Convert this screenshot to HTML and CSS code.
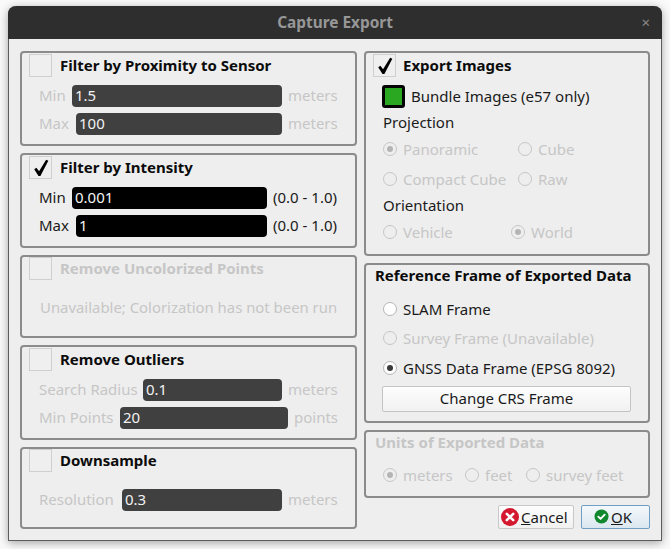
FILE: index.html
```html
<!DOCTYPE html>
<html lang="en">
<head>
<meta charset="utf-8">
<title>Capture Export</title>
<link rel="stylesheet" href="styles.css">
</head>
<body>
<div class="window">
  <header class="titlebar">
    <span class="title">Capture Export</span>
    <span class="close">×</span>
  </header>
  <main class="content">
    <div class="column left">
      <section class="group g-prox">
        <div class="head"><span class="check"></span><span class="head-text">Filter by Proximity to Sensor</span></div>
        <div class="rows">
          <div class="row r-min off"><span>Min</span><span class="input">1.5</span><span>meters</span></div>
          <div class="row r-max off"><span>Max</span><span class="input">100</span><span>meters</span></div>
        </div>
      </section>
      <section class="group g-int">
        <div class="head"><span class="check"><svg viewBox="0 0 22 22" class="tick"><path d="M4.4 12.8l2.3-1.6 2.8 3.8L16.9 2.8l2.3 1-8.3 16h-2z"/></svg></span><span class="head-text">Filter by Intensity</span></div>
        <div class="rows tight">
          <div class="row r-minr"><span>Min</span><span class="input live">0.001</span><span>(0.0 - 1.0)</span></div>
          <div class="row r-maxr"><span>Max</span><span class="input live">1</span><span>(0.0 - 1.0)</span></div>
        </div>
      </section>
      <section class="group g-unc">
        <div class="head"><span class="check"></span><span class="head-text off">Remove Uncolorized Points</span></div>
        <p class="note off">Unavailable; Colorization has not been run</p>
      </section>
      <section class="group g-out">
        <div class="head"><span class="check"></span><span class="head-text">Remove Outliers</span></div>
        <div class="rows tight">
          <div class="row r-search off"><span>Search Radius</span><span class="input">0.1</span><span>meters</span></div>
          <div class="row r-pts off"><span>Min Points</span><span class="input">20</span><span>points</span></div>
        </div>
      </section>
      <section class="group g-down">
        <div class="head"><span class="check"></span><span class="head-text">Downsample</span></div>
        <div class="rows solo">
          <div class="row r-res off"><span>Resolution</span><span class="input">0.3</span><span>meters</span></div>
        </div>
      </section>
    </div>
    <div class="column right">
      <section class="group g-img">
        <div class="head"><span class="check"><svg viewBox="0 0 22 22" class="tick"><path d="M4.4 12.8l2.3-1.6 2.8 3.8L16.9 2.8l2.3 1-8.3 16h-2z"/></svg></span><span class="head-text">Export Images</span></div>
        <div class="bundle"><span class="green"></span><span>Bundle Images (e57 only)</span></div>
        <div class="sub sub-proj">Projection</div>
        <div class="radios proj off">
          <label class="opt"><span class="radio on"></span>Panoramic</label>
          <label class="opt"><span class="radio"></span>Cube</label>
          <label class="opt"><span class="radio"></span>Compact Cube</label>
          <label class="opt"><span class="radio"></span>Raw</label>
        </div>
        <div class="sub sub-orient">Orientation</div>
        <div class="radios orient off">
          <label class="opt"><span class="radio"></span>Vehicle</label>
          <label class="opt"><span class="radio on"></span>World</label>
        </div>
      </section>
      <section class="group g-ref">
        <h2 class="group-title">Reference Frame of Exported Data</h2>
        <div class="stack">
          <label class="opt"><span class="radio live"></span>SLAM Frame</label>
          <label class="opt off"><span class="radio"></span>Survey Frame (Unavailable)</label>
          <label class="opt"><span class="radio live on"></span>GNSS Data Frame (EPSG 8092)</label>
        </div>
        <button class="crs" type="button">Change CRS Frame</button>
      </section>
      <section class="group g-units">
        <h2 class="group-title off">Units of Exported Data</h2>
        <div class="radios units off">
          <label class="opt"><span class="radio on"></span>meters</label>
          <label class="opt"><span class="radio"></span>feet</label>
          <label class="opt"><span class="radio"></span>survey feet</label>
        </div>
      </section>
      <div class="actions">
        <button class="btn cancel" type="button"><svg viewBox="0 0 18 18" class="btn-icon"><circle cx="9" cy="9" r="9" fill="#d3182f"/><path d="M5.8 5.8l6.4 6.4M12.2 5.8l-6.4 6.4" stroke="#fff" stroke-width="2.6" stroke-linecap="round" fill="none"/></svg><span><u>C</u>ancel</span></button>
        <button class="btn ok" type="button"><svg viewBox="0 0 16 16" class="btn-icon small"><circle cx="8" cy="8" r="7.5" fill="#12882e"/><path d="M4.6 8.2l2.4 2.4 4.4-4.6" stroke="#fff" stroke-width="2" stroke-linecap="round" stroke-linejoin="round" fill="none"/></svg><span><u>O</u>K</span></button>
      </div>
    </div>
  </main>
</div>
</body>
</html>
```
FILE: styles.css
```css
* { box-sizing: border-box; }
html, body { margin: 0; height: 549px; overflow: hidden; background: #fafafa; }
body {
  padding: 6px 8px 0;
  font-family: "Noto Sans", "Open Sans", sans-serif;
  font-size: 15px;
  color: #1a1a1a;
}
.window {
  width: 654px;
  height: 535px;
  background: #eeeeee;
  border: 1px solid #5c5c5c;
  border-top: 0;
  border-radius: 8px 8px 0 0;
  box-shadow: 0 2px 10px rgba(0, 0, 0, .35);
}
.titlebar {
  position: relative;
  height: 33px;
  margin: 0 -1px;
  padding-bottom: 1px;
  background: #2e2e2e;
  border-radius: 8px 8px 0 0;
  display: flex;
  align-items: center;
  justify-content: center;
}
.title { font-weight: 700; font-size: 15.4px; color: #979797; }
.close { position: absolute; right: 12px; top: 6px; color: #8a8a8a; font-size: 15px; }
.content {
  display: grid;
  grid-template-columns: 337px 286px;
  column-gap: 7px;
  padding: 12px 11px 0;
}
.column { display: flex; flex-direction: column; row-gap: 7px; }
.group {
  border: 2px solid #8b8b8b;
  border-radius: 4px;
  padding: 1px 0 0 7px;
}
.g-prox { height: 95px; }
.g-int { height: 94.5px; }
.g-unc { height: 83.5px; }
.g-out { height: 94.5px; }
.g-down { height: 82.5px; }
.g-img { height: 205px; }
.g-ref { height: 159.5px; padding: 0 0 0 9px; }
.g-units { height: 68px; padding: 0 0 0 9px; }
.head { display: flex; align-items: center; column-gap: 8px; height: 22.5px; }
.g-img .head { column-gap: 7px; }
.head-text { margin-bottom: 1px; font-weight: 700; font-size: 15px; color: #0c0c0c; }
.check {
  flex: none;
  width: 23px;
  height: 23px;
  border: 1px solid #cfcfcf;
  background: #efefef;
}
.tick { display: block; width: 21px; height: 21px; }
.tick path { fill: #000; }
.off, .off .head-text { color: #c6c6c6; }
.rows { display: flex; flex-direction: column; row-gap: 6px; padding: 8px 17px 0 11px; }
.rows.tight { padding-top: 8.5px; }
.rows.solo { padding-top: 17px; }
.row { display: grid; column-gap: 6px; height: 22px; align-items: center; }
.r-min { grid-template-columns: 26px 1fr 50px; }
.r-max { grid-template-columns: 30px 1fr 50px; }
.r-minr { grid-template-columns: 26px 1fr 65px; }
.r-maxr { grid-template-columns: 30px 1fr 65px; }
.r-search { grid-template-columns: 97px 1fr 50px; }
.r-pts { grid-template-columns: 74px 1fr 44px; }
.r-res { grid-template-columns: 76px 1fr 50px; }
.row > span { margin-bottom: 2px; white-space: nowrap; }
.row > span:first-child { margin-left: -1px; }
.row > .input {
  height: 22px;
  margin-bottom: 0;
  line-height: 20px;
  padding-left: 3px;
  background: #404040;
  color: #f2f2f2;
  border-radius: 4px;
}
.row > .input.live { background: #000; color: #f4f4f4; }
.note { margin: 0; padding: 17px 0 0 11px; font-size: 14.9px; white-space: nowrap; }
.bundle {
  display: flex;
  align-items: center;
  column-gap: 6px;
  margin: 8px 0 0 9px;
  height: 23px;
}
.green {
  width: 23px;
  height: 23px;
  background: #2aa821;
  border: 3px solid #050505;
  border-radius: 3px;
}
.sub { margin-left: 10px; height: 20px; line-height: 20px; }
.sub-proj { margin-top: 4px; }
.sub-orient { margin-top: 1px; }
.radios { display: grid; margin-left: 10px; }
.proj { grid-template-columns: 135px 1fr; grid-auto-rows: 29.5px; margin-top: 3px; }
.orient { grid-template-columns: 128px 1fr; grid-auto-rows: 20px; margin-top: 7px; }
.opt { display: flex; align-items: center; column-gap: 6px; white-space: nowrap; }
.radio {
  position: relative;
  flex: none;
  width: 14px;
  height: 14px;
  border: 1px solid #c6c6c6;
  border-radius: 50%;
}
.radio.on::after {
  content: "";
  position: absolute;
  inset: 3px;
  border-radius: 50%;
  background: #b4b4b4;
}
.radio.live { border-color: #b5b5b5; background: #fff; }
.radio.live.on::after { background: #3a3a3a; }
.group-title { margin: 0; font-size: 15px; font-weight: 700; line-height: 20px; color: #0c0c0c; }
.group-title.off { color: #c6c6c6; }
.stack { display: grid; grid-auto-rows: 29.5px; margin: 9px 0 0 8px; }
.crs {
  display: block;
  width: 249px;
  height: 26px;
  margin: 3px 0 0 7px;
  padding: 0 0 2px;
  border: 1px solid #c4c4c4;
  border-radius: 2px;
  background: linear-gradient(#fdfdfd, #f1f1f1);
  font: inherit;
  color: #1a1a1a;
}
.units { grid-template-columns: 82px 61px 1fr; margin: 13px 0 0 8px; height: 20px; }
.actions { display: flex; justify-content: flex-end; column-gap: 7px; }
.btn {
  display: flex;
  align-items: center;
  column-gap: 2px;
  height: 24px;
  padding: 0 0 0 2px;
  border: 1px solid #c8c8c8;
  border-radius: 2px;
  background: linear-gradient(#fdfdfd, #f1f1f1);
  font: inherit;
  color: #1a1a1a;
}
.cancel { width: 76px; }
.ok { width: 69px; padding-left: 12px; border-color: #6f9fc4; background: linear-gradient(#f4f8fb, #dbe7f0); }
.btn-icon { width: 18px; height: 18px; }
.btn-icon.small { width: 15px; height: 15px; }
```
